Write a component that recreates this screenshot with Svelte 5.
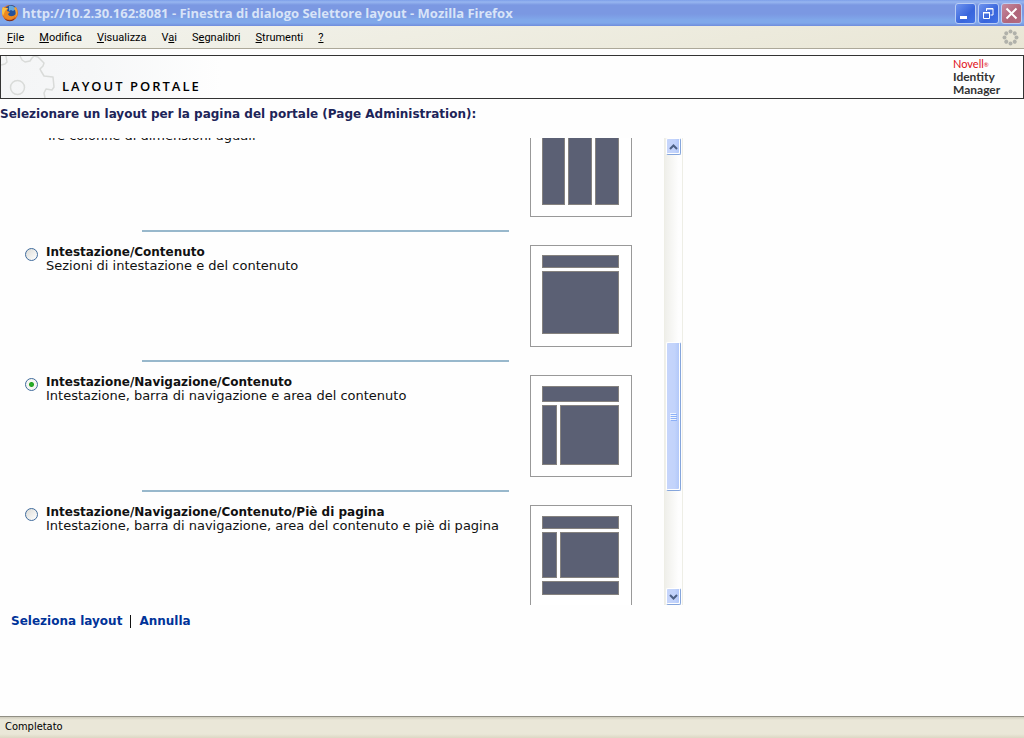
<script>
    import { onMount } from 'svelte';

    const menus = [
        { key: 'F', rest: 'ile' },
        { key: 'M', rest: 'odifica' },
        { key: 'V', rest: 'isualizza' },
        { pre: 'V', key: 'a', rest: 'i' },
        { pre: 'S', key: 'e', rest: 'gnalibri' },
        { key: 'S', rest: 'trumenti' },
        { key: '?', rest: '' },
    ];

    // blocks are [x, y, width, height] inside the 102px preview
    const layouts = [
        {
            id: 'three-columns',
            title: '',
            description: 'Tre colonne di dimensioni uguali',
            blocks: [[12, 10, 23, 80], [38, 10, 24, 80], [65, 10, 24, 80]],
        },
        {
            id: 'header-content',
            title: 'Intestazione/Contenuto',
            description: 'Sezioni di intestazione e del contenuto',
            blocks: [[12, 10, 77, 13], [12, 26, 77, 63]],
        },
        {
            id: 'header-nav-content',
            title: 'Intestazione/Navigazione/Contenuto',
            description: 'Intestazione, barra di navigazione e area del contenuto',
            blocks: [[12, 11, 77, 16], [12, 30, 15, 60], [30, 30, 59, 60]],
        },
        {
            id: 'header-nav-content-footer',
            title: 'Intestazione/Navigazione/Contenuto/Piè di pagina',
            description: 'Intestazione, barra di navigazione, area del contenuto e piè di pagina',
            blocks: [[12, 11, 77, 13], [12, 27, 15, 46], [30, 27, 59, 46], [12, 76, 77, 14]],
        },
    ];

    const throbber = [0, 45, 90, 135, 180, 225, 270, 315];

    let selected = 'header-nav-content';
    let list;

    onMount(() => {
        list.scrollTop = 23;
    });

    function scrollList(amount) {
        list.scrollTop += amount;
    }
</script>

<style>
    :global(body) {
        margin: 0;
        background: #fefefe;
    }

    .window {
        min-height: 100vh;
        display: flex;
        flex-direction: column;
        font-family: "DejaVu Sans", Verdana, sans-serif;
        font-size: 12px;
        color: #111;
    }

    button {
        padding: 0;
        border: 0;
        background: none;
        font: inherit;
        color: inherit;
    }

    svg {
        display: block;
    }

    .title-bar {
        height: 26px;
        box-sizing: border-box;
        padding: 0 2px;
        display: flex;
        align-items: center;
        gap: 4px;
        background: linear-gradient(#7d9fe9 0, #97b6f0 2px, #7b98e2 5px, #7b98e2 14px, #80a8ea 20px, #80a8ea 23px, #6f8cdc 26px);
    }

    .title-bar h1 {
        flex: 1;
        margin: 0;
        font-family: "Open Sans", "Trebuchet MS", sans-serif;
        font-size: 13px;
        font-weight: bold;
        line-height: 18px;
        color: #d8e4f8;
        white-space: nowrap;
    }

    .window-buttons {
        display: flex;
        gap: 2px;
    }

    .window-buttons button {
        width: 21px;
        height: 21px;
        box-sizing: border-box;
        border: 1px solid #b9cdf5;
        border-radius: 3px;
        background: linear-gradient(135deg, #6f94ee, #3865dc 60%, #4272e6);
    }

    .window-buttons .close {
        background: linear-gradient(135deg, #c58a9f, #b0657a 60%, #b46b80);
    }

    .menu-bar {
        height: 23px;
        box-sizing: border-box;
        border-bottom: 1px solid #aca899;
        padding: 0 5px 0 7px;
        display: flex;
        align-items: center;
        gap: 15px;
        font-family: Roboto, Tahoma, sans-serif;
        font-size: 11px;
        line-height: 15px;
        color: #000;
        background: linear-gradient(170deg, #f2f3ee, #efeee3 40%, #e9e6d5);
    }

    .menu-bar .throbber {
        margin-left: auto;
    }

    .banner {
        height: 44px;
        box-sizing: border-box;
        margin-top: 6px;
        border: 1px solid #333;
        display: flex;
        justify-content: space-between;
        background: linear-gradient(90deg, #f4f5f6 0, #f6f7f8 90px, #fefefe 220px);
    }

    .banner-title {
        display: flex;
        gap: 6px;
    }

    .banner h2 {
        margin: 0;
        align-self: flex-end;
        font-family: "Open Sans", "Trebuchet MS", sans-serif;
        font-size: 13px;
        font-weight: 600;
        line-height: 24px;
        letter-spacing: 2px;
        color: #000;
    }

    .brand {
        width: 70px;
        padding-top: 1px;
        font-family: Lato, "Trebuchet MS", sans-serif;
        font-size: 12px;
        font-weight: bold;
        line-height: 13px;
        color: #333;
    }

    .brand .novell {
        display: flex;
        align-items: flex-end;
        font-size: 11px;
        font-weight: normal;
        color: #e01020;
    }

    .brand small {
        font-size: 6px;
        line-height: 10px;
    }

    main {
        flex: 1;
    }

    .prompt {
        margin: 8px 0 16px;
        font-size: 12px;
        font-weight: bold;
        line-height: 15px;
        color: #1d2458;
    }

    .picker {
        display: flex;
        height: 467px;
    }

    .layouts {
        width: 664px;
        margin: 0;
        padding: 0;
        list-style: none;
        overflow: hidden;
    }

    .layouts li {
        height: 130px;
        display: flex;
        gap: 21px;
    }

    .details {
        width: 509px;
        height: 117px;
        display: flex;
        flex-direction: column;
        justify-content: space-between;
    }

    .option {
        padding-left: 25px;
        display: flex;
        gap: 8px;
    }

    .option input {
        appearance: none;
        flex: none;
        width: 13px;
        height: 13px;
        margin: 3px 0 0;
        border: 1px solid #3f6b9c;
        border-radius: 50%;
        background: linear-gradient(135deg, #dcdcd7, #fff);
    }

    .option input:checked {
        background: radial-gradient(circle, #2bb52b 0, #21a121 2px, #f6f6f2 3px);
    }

    .option label {
        line-height: 14px;
        font-size: 13px;
    }

    .option strong {
        display: block;
        min-height: 14px;
        font-size: 12px;
    }

    .details hr {
        width: 367px;
        height: 2px;
        margin: 0 0 0 auto;
        border: 0;
        background: #98b8cc;
    }

    .preview {
        flex: none;
    }

    .scrollbar {
        width: 19px;
        box-sizing: border-box;
        border: solid #eeeee6;
        border-width: 0 1px;
        padding: 0 1px;
        display: flex;
        flex-direction: column;
        background: linear-gradient(90deg, #efefea, #fefefe 80%);
    }

    .scrollbar button,
    .handle {
        box-sizing: border-box;
        border: 1px solid #fff;
        border-right-color: #86a6dc;
        border-bottom-color: #86a6dc;
        border-radius: 2px;
        box-shadow: inset -1px -1px #fff;
        background: linear-gradient(90deg, #c6d5fb, #c2d3fb 60%, #afc6f8);
    }

    .scrollbar button {
        height: 17px;
        display: flex;
        align-items: center;
        justify-content: center;
    }

    .track {
        flex: 1;
        display: grid;
        grid-template-rows: 187fr 149fr 97fr;
    }

    .handle {
        grid-row: 2;
        display: flex;
        align-items: center;
        justify-content: center;
    }

    .actions {
        padding: 8px 11px;
        display: flex;
        align-items: center;
        gap: 8px;
        font-weight: bold;
        line-height: 16px;
    }

    .actions a {
        color: #039;
        text-decoration: none;
    }

    .separator {
        width: 1px;
        height: 13px;
        background: #111;
    }

    .status-bar {
        height: 22px;
        box-sizing: border-box;
        border-top: 1px solid #918f84;
        padding: 2px 5px;
        font-family: "DejaVu Sans Condensed", Tahoma, sans-serif;
        font-size: 11px;
        line-height: 15px;
        color: #000;
        background: linear-gradient(#cfccbd 0, #eae7d8 3px, #eae7d8 17px, #dcd8c4);
    }
</style>

<div class="window">
    <header class="title-bar">
        <svg width="16" height="18" viewBox="0 0 16 18" aria-hidden="true">
            <circle cx="8" cy="9" r="8" fill="#e2711d" />
            <circle cx="9" cy="7" r="6" fill="#24529c" />
            <path d="M7 2c3-1 6 1 7 3l-3 2-2-1-2 1z" fill="#66a8dc" />
            <path d="M1 3l2 1 3 0-1 3 3 1-2 2c1 3 5 3 8 0-1 4-4 6-8 5C2 14 0 10 0 7z" fill="#ed8a22" />
            <path d="M1 3l2 1 3 0-3 3-2 5C-1 8 0 5 1 3z" fill="#f9c044" />
            <path d="M14 3c2 4 2 8-1 11 1-4 1-7-1-10z" fill="#f4a330" />
            <path d="M2 14c3 3 9 3 12-1-2 5-9 6-12 1z" fill="#762c20" />
        </svg>
        <h1>http://10.2.30.162:8081 - Finestra di dialogo Selettore layout - Mozilla Firefox</h1>
        <div class="window-buttons">
            <button aria-label="Riduci a icona">
                <svg width="19" height="19" viewBox="0 0 19 19"><path d="M4 12h7v3H4z" fill="#fff" /></svg>
            </button>
            <button aria-label="Ripristina">
                <svg width="19" height="19" viewBox="0 0 19 19" fill="none" stroke="#fff">
                    <path d="M7.500 7V4.500h6.500V11H11.500M7 5h7" />
                    <path d="M4.500 8v6.500h6V8.500M4 8.500h7M4 9h7" />
                </svg>
            </button>
            <button class="close" aria-label="Chiudi">
                <svg width="19" height="19" viewBox="0 0 19 19"><path d="M4.500 4.500l10 10M14.500 4.500l-10 10" stroke="#fff" stroke-width="2" /></svg>
            </button>
        </div>
    </header>

    <nav class="menu-bar">
        {#each menus as menu}
            <button>{menu.pre ?? ''}<u>{menu.key}</u>{menu.rest}</button>
        {/each}
        <svg class="throbber" width="17" height="17" viewBox="0 0 17 17" aria-hidden="true">
            {#each throbber as angle}
                <circle cx="8.500" cy="2.500" r="2" fill="#b0b1aa" transform="rotate({angle} 8.500 8.500)" />
            {/each}
        </svg>
    </nav>

    <div class="banner">
        <div class="banner-title">
            <svg width="55" height="42" viewBox="0 0 55 42" fill="none" stroke="#d9dbd9" stroke-linejoin="round" aria-hidden="true">
                <path d="M0 9L4 8 6 6 5 0M19 0L21 4 24 6 29 5 31 2 33 0 37 1 43 7 42 10 39 13 40 15 43 20 52 21 53 31 51 34 45 33 43 37 44 42" stroke-width="1.500" />
                <circle cx="16.500" cy="31.500" r="7" stroke-width="1.500" />
            </svg>
            <h2>LAYOUT PORTALE</h2>
        </div>
        <div class="brand">
            <div class="novell">Novell<small>®</small></div>
            <div>Identity</div>
            <div>Manager</div>
        </div>
    </div>

    <main>
        <p class="prompt">Selezionare un layout per la pagina del portale (Page Administration):</p>

        <div class="picker">
            <ul class="layouts" bind:this={list}>
                {#each layouts as layout, i}
                    <li>
                        <div class="details">
                            <div class="option">
                                <input type="radio" name="layout" id={layout.id} value={layout.id} bind:group={selected} />
                                <label for={layout.id}>
                                    <strong>{layout.title}</strong>
                                    {layout.description}
                                </label>
                            </div>
                            {#if i < layouts.length - 1}
                                <hr />
                            {/if}
                        </div>
                        <svg class="preview" width="102" height="102" viewBox="0 0 102 102" aria-hidden="true">
                            <rect x="0.500" y="0.500" width="101" height="101" fill="#fff" stroke="#999" />
                            {#each layout.blocks as [x, y, width, height]}
                                <rect x={x + 0.5} y={y + 0.5} width={width - 1} height={height - 1} fill="#5b6074" stroke="#85827f" />
                            {/each}
                        </svg>
                    </li>
                {/each}
            </ul>

            <div class="scrollbar">
                <button aria-label="Scorri su" on:click={() => scrollList(-20)}>
                    <svg width="9" height="6" viewBox="0 0 9 6"><path d="M1 5l3.500-3.500L8 5" fill="none" stroke="#4d6185" stroke-width="2" /></svg>
                </button>
                <div class="track">
                    <div class="handle">
                        <svg width="7" height="8" viewBox="0 0 7 8">
                            <path d="M0 .5h6M0 2.500h6M0 4.500h6M0 6.500h6" stroke="#eef4fe" />
                            <path d="M1 1.500h6M1 3.500h6M1 5.500h6M1 7.500h6" stroke="#8cb0f8" />
                        </svg>
                    </div>
                </div>
                <button aria-label="Scorri giù" on:click={() => scrollList(20)}>
                    <svg width="9" height="6" viewBox="0 0 9 6"><path d="M1 1l3.500 3.500L8 1" fill="none" stroke="#4d6185" stroke-width="2" /></svg>
                </button>
            </div>
        </div>

        <div class="actions">
            <a href="#select">Seleziona layout</a>
            <span class="separator"></span>
            <a href="#cancel">Annulla</a>
        </div>
    </main>

    <footer class="status-bar">Completato</footer>
</div>
